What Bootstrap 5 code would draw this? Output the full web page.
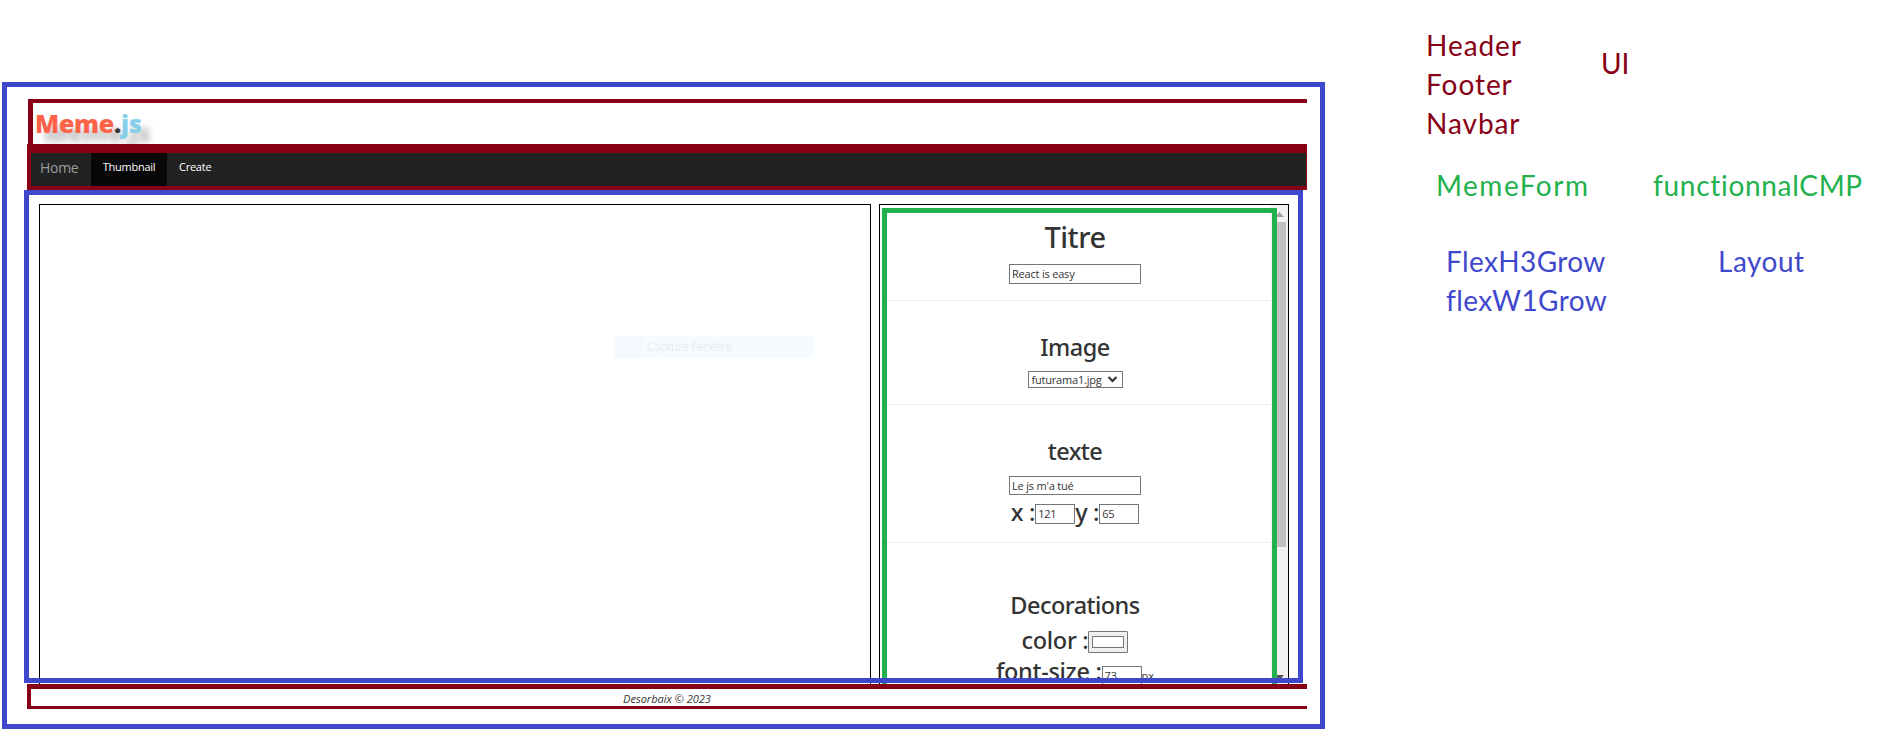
<!DOCTYPE html>
<html lang="fr">
<head>
<meta charset="utf-8">
<title>Meme.js – Layout</title>
<link href="https://cdn.jsdelivr.net/npm/bootstrap@5.3.0/dist/css/bootstrap.min.css" rel="stylesheet">
<style>
:root{--blue:#3f48cc;--wine:#880015;--leaf:#22b14c}
body{font-family:"Open Sans","Noto Sans",sans-serif;font-size:11px;color:#333;background:#fff;height:753px;overflow:hidden}
.app-frame{width:1323px;height:647px;margin:82px 0 0 2px;border:5px solid var(--blue);padding-top:12px}
.app-header{width:1279px;height:45px;margin-left:21px;border-top:4px solid var(--wine);border-left:5px solid var(--wine);overflow:hidden;padding-left:2px}
.logo{font-size:25px;font-weight:800;line-height:34px;padding-top:3px;letter-spacing:-.25px;text-shadow:9px 9px 6px rgba(0,0,0,.25);color:tomato;white-space:nowrap}
.logo i{font-style:normal;color:#333}.logo b{color:skyblue;font-weight:800}
.app-nav{width:1280px;height:46px;margin-left:20px;background:#222;border:solid var(--wine);border-width:9px 1px 4px 4px;padding:0;align-items:stretch;flex-wrap:nowrap;justify-content:flex-start}
.app-nav a{color:#fff;text-decoration:none;line-height:28px;letter-spacing:-.25px}
.app-nav .home{width:60px;padding-left:9px;font-size:14px;line-height:30px;color:#9d9d9d;letter-spacing:-.3px}
.app-nav .thumb{width:76px;background:#080808}
.app-nav .create{padding-left:12px}
.work{width:1279px;height:494px;margin-left:17px;position:relative;padding:14px 14px 0 15px;gap:8px}
.work-outline{position:absolute;inset:0 0 1px 0;border:5px solid var(--blue);z-index:3}
.viewer{width:832px;border:1px solid #000;border-bottom:0;padding:131px 0 0 575px}
.ghost{width:198px;height:22px;line-height:22px;background:linear-gradient(90deg,#f5f9ff 28px,#f5fbff 28px);padding-left:32px;color:#ececec;font-size:12px;letter-spacing:-.45px}
.editor{width:410px;border:1px solid #000;border-bottom:0;position:relative;overflow:hidden}
.form-outline{position:absolute;left:2px;top:3px;width:395px;height:500px;border:5px solid var(--leaf);z-index:2}
.form-body{width:391px;flex:none}
.form-body section{border-bottom:1px solid #eee;text-align:center;padding-right:1px}
.s1{height:96px;padding-top:10px}.s2{height:104px;padding-top:29px}.s3{height:138px;padding-top:29px}.s4{height:190px;padding-top:45px}
.h-big,.h-mid,.lbl{font-family:"Noto Sans","Open Sans",sans-serif;font-weight:500}
.h-big{font-size:29px;line-height:44px;margin:0 0 5px;letter-spacing:-.5px}
.h-mid{font-size:23.5px;line-height:34px;margin:0;letter-spacing:-.55px}
.field{display:block;border:1px solid #767676;background:#fff;color:#333;font-size:11px;height:20px;line-height:18px;padding:0 2px 1px;border-radius:0;outline:0;letter-spacing:-.2px}
.wide{width:132px;margin:0 auto}
.num{width:40px}
.pick{width:95px;height:17px;margin:7px auto 0;line-height:15px;padding-left:3px}
.lbl{font-size:23.5px;line-height:28px;letter-spacing:-.3px;white-space:pre}
.swatch{width:40px;height:22px;border:1px solid #767676;background:#efefef;border-radius:1px;padding:4px 3px}
.swatch div{border:1px solid #767676;background:#fff;height:12px}
.scroller{width:17px;background:#f1f1f1;flex:none;padding:7px 2px 0}
.scroller .grip{height:325px;background:#c1c1c1;margin-top:5px}
.second{height:19px;margin-top:8px}
.xy{margin-top:3px}.xy .field{margin-top:6px}
.colr{margin-top:4px}.colr .swatch{margin-top:5px}.colr .lbl{line-height:29px;height:30px}
.fs{margin-top:1px}.fs .field{margin-top:9px}.unit{line-height:18px;padding-top:10px}
.dn{margin-top:128px}
.app-footer{width:1280px;height:25px;margin-left:20px;border:solid var(--wine);border-width:5px 0 3px 4px;text-align:center;font-style:italic;line-height:19px;font-size:11px;padding-right:4px}
.notes{font-family:Lato,sans-serif;font-size:28px;line-height:39px;padding:26px 0 0 101px;white-space:nowrap;font-variant-ligatures:none}
.wine{color:var(--wine)}.leaf{color:var(--leaf)}.blue{color:var(--blue)}
.n1{width:175px;letter-spacing:.95px}.n2{padding-top:18px}
.r2{padding:23px 0 0 10px}.n3{width:217px;letter-spacing:1.5px}.n5{letter-spacing:.7px}
.r3{padding:37px 0 0 20px}.n4{width:272px;letter-spacing:.4px}.n6{letter-spacing:.5px}
</style>
</head>
<body>
<div class="d-flex align-items-start">
<main class="app-frame flex-shrink-0">
  <header class="app-header"><div class="logo">Meme<i>.</i><b>js</b></div></header>
  <nav class="app-nav navbar"><a class="home" href="#">Home</a><a class="thumb text-center" href="#">Thumbnail</a><a class="create" href="#">Create</a></nav>
  <div class="work d-flex">
    <div class="work-outline"></div>
    <div class="viewer flex-shrink-0"><div class="ghost">Capture Fenêtre</div></div>
    <div class="editor d-flex flex-shrink-0">
      <div class="form-outline"></div>
      <div class="form-body">
        <section class="s1"><h1 class="h-big">Titre</h1><input class="field wide" value="React is easy"></section>
        <section class="s2"><h2 class="h-mid">Image</h2>
          <div class="field pick d-flex justify-content-between align-items-center"><span>futurama1.jpg</span><svg width="14" height="9" viewBox="0 0 14 9"><path d="M2.5 2 6.5 6 10.5 2" fill="none" stroke="#333" stroke-width="2.2"/></svg></div></section>
        <section class="s3"><h2 class="h-mid">texte</h2><input class="field wide second" value="Le js m'a tué">
          <div class="d-flex justify-content-center xy"><span class="lbl">x :</span><input class="field num" value="121"><span class="lbl">y :</span><input class="field num" value="65"></div></section>
        <section class="s4"><h2 class="h-mid">Decorations</h2>
          <div class="d-flex justify-content-center colr"><span class="lbl">color :</span><div class="swatch"><div></div></div></div>
          <div class="d-flex justify-content-center fs"><span class="lbl">font-size :</span><input class="field num" value="73"><span class="unit">px</span></div></section>
      </div>
      <div class="scroller"><svg class="d-block mx-auto" width="9" height="5"><path d="M0 5 4.5 0 9 5z" fill="#a3a3a3"/></svg><div class="grip"></div><svg class="d-block mx-auto dn" width="9" height="5"><path d="M0 0H9L4.5 5z" fill="#505050"/></svg></div>
    </div>
  </div>
  <footer class="app-footer">Desorbaix © 2023</footer>
</main>
<aside class="notes">
  <div class="wine d-flex"><div class="n1">Header<br>Footer<br>Navbar</div><div class="n2">UI</div></div>
  <div class="leaf d-flex r2"><div class="n3">MemeForm</div><div class="n5">functionnalCMP</div></div>
  <div class="blue d-flex r3"><div class="n4">FlexH3Grow<br>flexW1Grow</div><div class="n6">Layout</div></div>
</aside>
</div>
<script src="https://cdn.jsdelivr.net/npm/bootstrap@5.3.0/dist/js/bootstrap.bundle.min.js"></script>
</body>
</html>
